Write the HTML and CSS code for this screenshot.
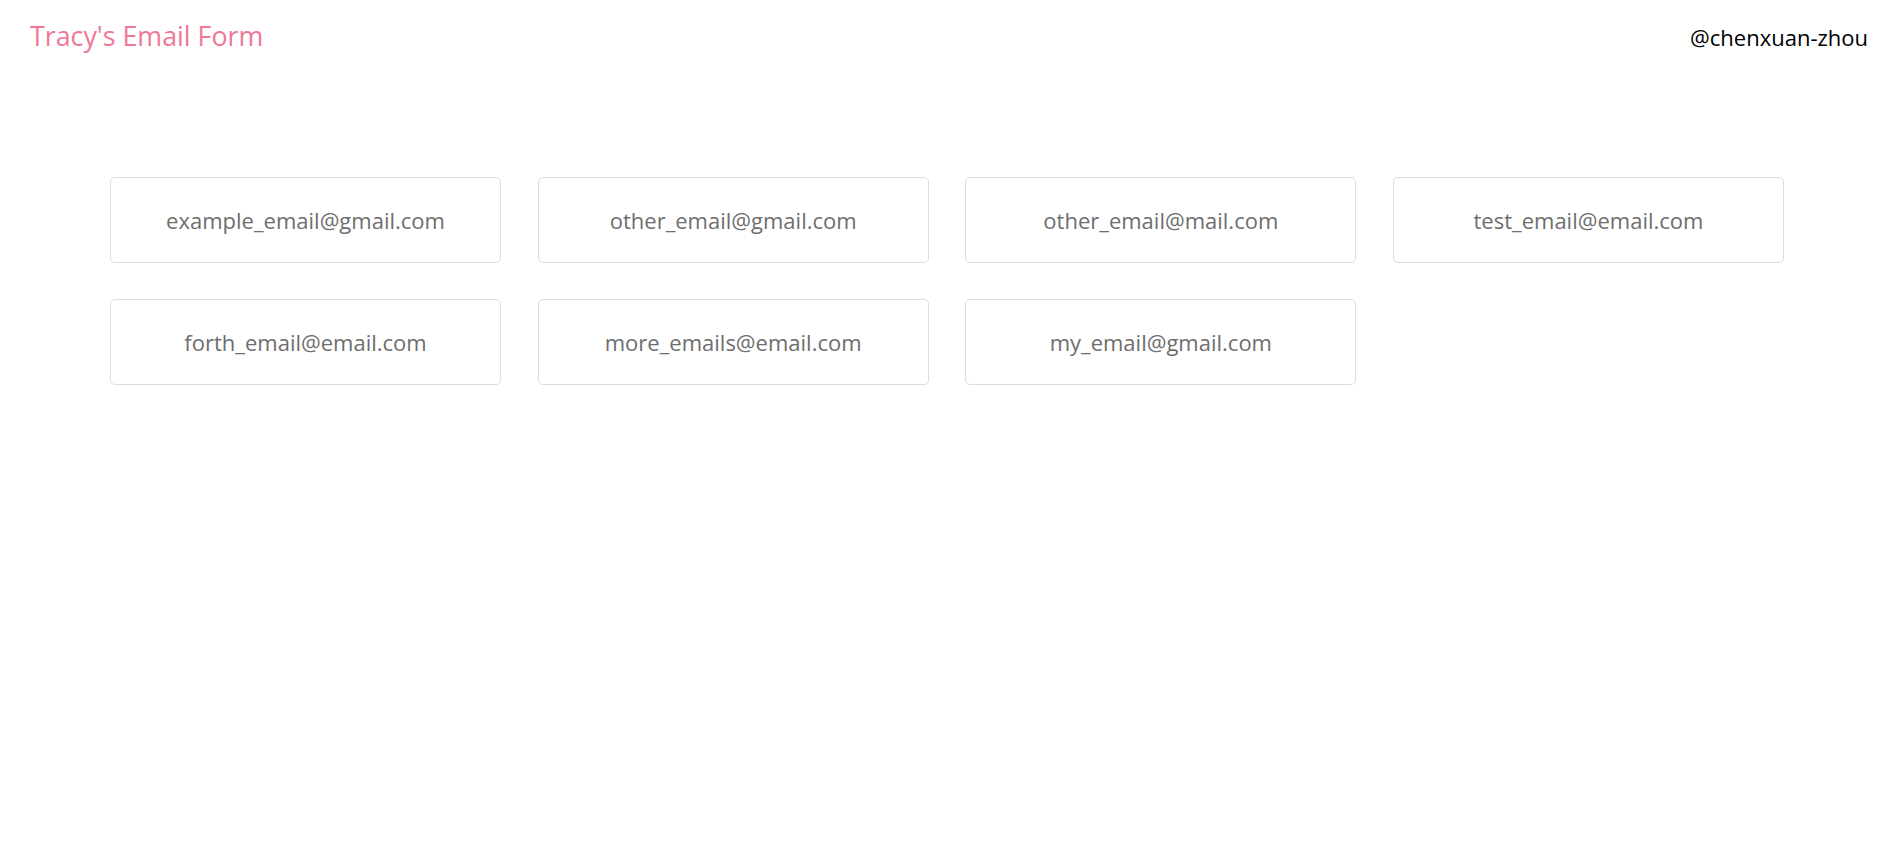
FILE: index.html
```html
<!DOCTYPE html>
<html lang="en">
<head>
<meta charset="utf-8">
<title>Tracy's Email Form</title>
<link rel="stylesheet" href="styles.css">
</head>
<body>
<header class="topbar">
  <h1 class="brand">Tracy's Email Form</h1>
  <span class="handle">@chenxuan-zhou</span>
</header>
<main class="emails">
  <div class="email-card">example_email@gmail.com</div>
  <div class="email-card">other_email@gmail.com</div>
  <div class="email-card">other_email@mail.com</div>
  <div class="email-card">test_email@email.com</div>
  <div class="email-card">forth_email@email.com</div>
  <div class="email-card">more_emails@email.com</div>
  <div class="email-card">my_email@gmail.com</div>
</main>
</body>
</html>
```
FILE: styles.css
```css
html, body {
  margin: 0;
  padding: 0;
  background: #ffffff;
}
body {
  font-family: "Open Sans", "Noto Sans", sans-serif;
}
.topbar {
  display: flex;
  justify-content: space-between;
  align-items: baseline;
  padding: 17px 20px 0 30px;
  height: 43px;
}
.brand {
  margin: 0;
  font-size: 26.8px;
  font-weight: 400;
  line-height: 38px;
  color: #ef7896;
}
.handle {
  font-size: 22px;
  color: #000000;
  line-height: 38px;
}
.emails {
  display: grid;
  grid-template-columns: repeat(4, 1fr);
  gap: 36px 36.6px;
  width: 1674px;
  margin: 117px 0 0 110px;
}
.email-card {
  height: 84px;
  border: 1px solid #dddddd;
  border-radius: 5px;
  display: flex;
  align-items: center;
  justify-content: center;
  font-size: 22px;
  color: #6e6e6e;
}
```
